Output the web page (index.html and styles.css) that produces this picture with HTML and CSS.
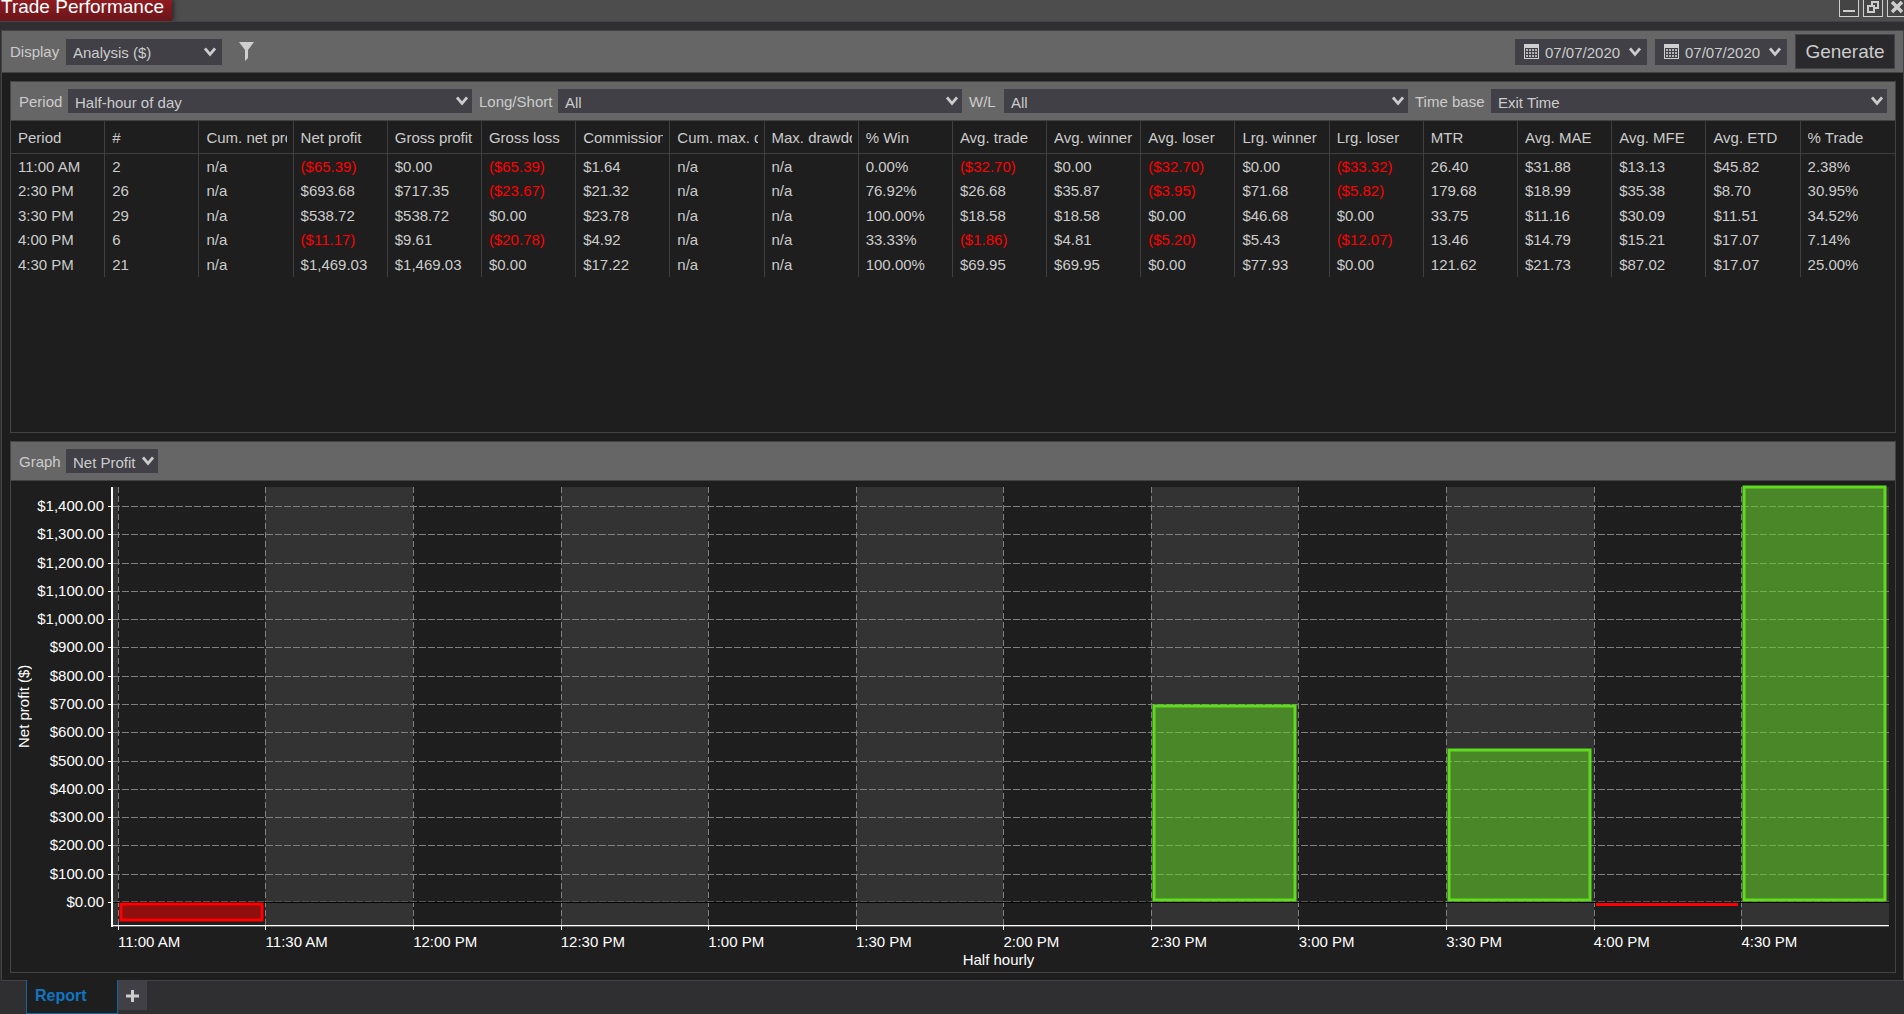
FILE: index.html
```html
<!DOCTYPE html>
<html lang="en">
<head>
<meta charset="utf-8">
<title>Trade Performance</title>
<link rel="stylesheet" href="styles.css">
</head>
<body>
<svg class="defs" aria-hidden="true">
  <symbol id="chevron" viewBox="0 0 12 10"><path d="M1 1.500 6 7.300 11 1.500" fill="none" stroke="currentColor" stroke-width="2.800"/></symbol>
  <symbol id="calendar" viewBox="0 0 15 15">
    <path d="M0 0h15v15H0z" fill="#cfcfcf"/>
    <path d="M1 4h13v10H1z" fill="#404046"/>
    <path d="M2 5h2v2H2zM5 5h2v2H5zM8 5h2v2H8zM11 5h2v2h-2zM2 8h2v2H2zM5 8h2v2H5zM8 8h2v2H8zM11 8h2v2h-2zM2 11h2v2H2zM5 11h2v2H5zM8 11h2v2H8zM11 11h2v2h-2z" fill="#b4b4b6"/>
  </symbol>
</svg>

<header class="titlebar">
  <h1 class="title">Trade Performance</h1>
  <div class="window-buttons">
    <button type="button" aria-label="Minimize"><svg width="18" height="16"><path d="M3 11h12" stroke="currentColor" stroke-width="2"/></svg></button>
    <button type="button" aria-label="Restore"><svg width="18" height="16"><path d="M8 5V2h6v6h-3M4 6h6v6H4z" fill="none" stroke="currentColor" stroke-width="2"/></svg></button>
    <button type="button" aria-label="Close"><svg width="18" height="16"><path d="M4 2l10 10M14 2 4 12" stroke="currentColor" stroke-width="3.500"/></svg></button>
  </div>
</header>

<main class="window">
  <div class="toolbar main-toolbar">
    <label for="display">Display</label>
    <div class="combo combo-display"><select id="display"><option>Analysis ($)</option></select><svg class="chevron"><use href="#chevron"/></svg></div>
    <button type="button" class="filter" aria-label="Filter"><svg width="15" height="19" viewBox="0 0 15 19"><path d="M0 0h15L9 8v8l-3 3V8z" fill="#cfcfcf"/></svg></button>
    <div class="combo combo-date"><svg class="calendar"><use href="#calendar"/></svg><select aria-label="Start date"><option>07/07/2020</option></select><svg class="chevron"><use href="#chevron"/></svg></div>
    <div class="combo combo-date"><svg class="calendar"><use href="#calendar"/></svg><select aria-label="End date"><option>07/07/2020</option></select><svg class="chevron"><use href="#chevron"/></svg></div>
    <button type="button" class="generate">Generate</button>
  </div>

  <div class="content">
    <section class="panel">
      <div class="toolbar filters">
        <label for="period">Period</label>
        <div class="combo"><select id="period"><option>Half-hour of day</option></select><svg class="chevron"><use href="#chevron"/></svg></div>
        <label for="side">Long/Short</label>
        <div class="combo"><select id="side"><option>All</option></select><svg class="chevron"><use href="#chevron"/></svg></div>
        <label for="wl">W/L</label>
        <div class="combo"><select id="wl"><option>All</option></select><svg class="chevron"><use href="#chevron"/></svg></div>
        <label for="timebase">Time base</label>
        <div class="combo"><select id="timebase"><option>Exit Time</option></select><svg class="chevron"><use href="#chevron"/></svg></div>
      </div>
      <table class="results">
        <thead>
          <tr><th><span>Period</span></th><th><span>#</span></th><th><span>Cum. net profit</span></th><th><span>Net profit</span></th><th><span>Gross profit</span></th><th><span>Gross loss</span></th><th><span>Commission</span></th><th><span>Cum. max. drawdown</span></th><th><span>Max. drawdown</span></th><th><span>% Win</span></th><th><span>Avg. trade</span></th><th><span>Avg. winner</span></th><th><span>Avg. loser</span></th><th><span>Lrg. winner</span></th><th><span>Lrg. loser</span></th><th><span>MTR</span></th><th><span>Avg. MAE</span></th><th><span>Avg. MFE</span></th><th><span>Avg. ETD</span></th><th><span>% Trade</span></th></tr>
        </thead>
        <tbody>
          <tr><td>11:00 AM</td><td>2</td><td>n/a</td><td class="neg">($65.39)</td><td>$0.00</td><td class="neg">($65.39)</td><td>$1.64</td><td>n/a</td><td>n/a</td><td>0.00%</td><td class="neg">($32.70)</td><td>$0.00</td><td class="neg">($32.70)</td><td>$0.00</td><td class="neg">($33.32)</td><td>26.40</td><td>$31.88</td><td>$13.13</td><td>$45.82</td><td>2.38%</td></tr>
          <tr><td>2:30 PM</td><td>26</td><td>n/a</td><td>$693.68</td><td>$717.35</td><td class="neg">($23.67)</td><td>$21.32</td><td>n/a</td><td>n/a</td><td>76.92%</td><td>$26.68</td><td>$35.87</td><td class="neg">($3.95)</td><td>$71.68</td><td class="neg">($5.82)</td><td>179.68</td><td>$18.99</td><td>$35.38</td><td>$8.70</td><td>30.95%</td></tr>
          <tr><td>3:30 PM</td><td>29</td><td>n/a</td><td>$538.72</td><td>$538.72</td><td>$0.00</td><td>$23.78</td><td>n/a</td><td>n/a</td><td>100.00%</td><td>$18.58</td><td>$18.58</td><td>$0.00</td><td>$46.68</td><td>$0.00</td><td>33.75</td><td>$11.16</td><td>$30.09</td><td>$11.51</td><td>34.52%</td></tr>
          <tr><td>4:00 PM</td><td>6</td><td>n/a</td><td class="neg">($11.17)</td><td>$9.61</td><td class="neg">($20.78)</td><td>$4.92</td><td>n/a</td><td>n/a</td><td>33.33%</td><td class="neg">($1.86)</td><td>$4.81</td><td class="neg">($5.20)</td><td>$5.43</td><td class="neg">($12.07)</td><td>13.46</td><td>$14.79</td><td>$15.21</td><td>$17.07</td><td>7.14%</td></tr>
          <tr><td>4:30 PM</td><td>21</td><td>n/a</td><td>$1,469.03</td><td>$1,469.03</td><td>$0.00</td><td>$17.22</td><td>n/a</td><td>n/a</td><td>100.00%</td><td>$69.95</td><td>$69.95</td><td>$0.00</td><td>$77.93</td><td>$0.00</td><td>121.62</td><td>$21.73</td><td>$87.02</td><td>$17.07</td><td>25.00%</td></tr>
        </tbody>
      </table>
    </section>

    <section class="panel">
      <div class="toolbar graph-toolbar">
        <label for="graph">Graph</label>
        <div class="combo combo-graph"><select id="graph"><option>Net Profit</option></select><svg class="chevron"><use href="#chevron"/></svg></div>
      </div>
      <div class="chart">
        <div class="y-title">Net profit ($)</div>
        <ul class="y-labels">
          <li>$1,400.00</li><li>$1,300.00</li><li>$1,200.00</li><li>$1,100.00</li><li>$1,000.00</li><li>$900.00</li><li>$800.00</li><li>$700.00</li><li>$600.00</li><li>$500.00</li><li>$400.00</li><li>$300.00</li><li>$200.00</li><li>$100.00</li><li>$0.00</li>
        </ul>
        <svg class="plot" viewBox="0 0 1781 445" preserveAspectRatio="none" role="img" aria-label="Net profit by half hour">
          <path class="band" d="M5 1h5v438H5zM157 1h148v438H157zM453 1h147v438H453zM748 1h147v438H748zM1043 1h147v438h-147zM1338 1h148v438h-148zM1633 1h148v438h-148z"/>
          <path class="grid" d="M5 20.500H1781M5 48.500H1781M5 77.500H1781M5 105.500H1781M5 133.500H1781M5 161.500H1781M5 190.500H1781M5 218.500H1781M5 246.500H1781M5 275.500H1781M5 303.500H1781M5 331.500H1781M5 359.500H1781M5 388.500H1781"/>
          <path class="grid grid-zero" d="M5 415.500H1781"/>
          <path class="grid grid-v" d="M10.500 1V439M157.500 1V439M305.500 1V439M453.500 1V439M600.500 1V439M748.500 1V439M895.500 1V439M1043.500 1V439M1190.500 1V439M1338.500 1V439M1486.500 1V439M1633.500 1V439"/>
          <path class="zero" d="M5 416.500H1781"/>
          <path class="axis-shade" d="M5 440.500H1781"/>
          <path class="tick" d="M0 20.500H4M0 48.500H4M0 77.500H4M0 105.500H4M0 133.500H4M0 161.500H4M0 190.500H4M0 218.500H4M0 246.500H4M0 275.500H4M0 303.500H4M0 331.500H4M0 359.500H4M0 388.500H4M0 416.500H4M3 439.500H1781M10.500 440V444M157.500 440V444M305.500 440V444M453.500 440V444M600.500 440V444M748.500 440V444M895.500 440V444M1043.500 440V444M1190.500 440V444M1338.500 440V444M1486.500 440V444M1633.500 440V444"/>
          <path class="axis" d="M4 1V441"/>
          <path class="gain" d="M1046 220h141v194h-141zM1341 264h141v150h-141zM1636 1h141v413h-141z"/>
          <path class="loss" d="M13 418h141v16H13z"/>
          <path class="loss-flat" d="M1488 418.500h142"/>
        </svg>
        <ul class="x-labels">
          <li>11:00 AM</li><li>11:30 AM</li><li>12:00 PM</li><li>12:30 PM</li><li>1:00 PM</li><li>1:30 PM</li><li>2:00 PM</li><li>2:30 PM</li><li>3:00 PM</li><li>3:30 PM</li><li>4:00 PM</li><li>4:30 PM</li>
        </ul>
        <div class="x-title">Half hourly</div>
      </div>
    </section>
  </div>
</main>

<nav class="tabs">
  <a class="tab" href="#report">Report</a>
  <button type="button" class="add-tab" aria-label="Add tab"><svg width="13" height="12"><path d="M0 6h13M6.500 0v12" stroke="currentColor" stroke-width="3"/></svg></button>
</nav>
</body>
</html>
```

FILE: styles.css
```css
* { box-sizing: border-box; }

body {
  margin: 0;
  height: 100vh;
  display: flex;
  flex-direction: column;
  overflow: hidden;
  background: #2f2f31;
  color: #cccccc;
  font: 15px/18px "Liberation Sans", Arial, sans-serif;
}

button, select { font: inherit; color: inherit; margin: 0; border: 0; padding: 0; border-radius: 0; }
ul { margin: 0; padding: 0; list-style: none; }
.defs { display: none; }

/* Title bar */
.titlebar {
  flex: none;
  display: flex;
  justify-content: space-between;
  height: 22px;
  background: #4d4d4d;
  border-bottom: 1px solid #434345;
}
.title {
  margin: 0;
  width: 172px;
  height: 21px;
  padding-left: 1px;
  background: linear-gradient(#8f1b20, #6a151a);
  box-shadow: 2px 0 4px #2a2a2a;
  clip-path: inset(0 -8px 0 0);
  color: #ffffff;
  font-size: 19px;
  font-weight: 400;
  line-height: 13px;
  white-space: nowrap;
}
.window-buttons { display: flex; gap: 4px; margin-right: -3px; }
.window-buttons button {
  width: 20px;
  height: 17px;
  border: 1px solid #cfcfcf;
  border-top: 0;
  background: #444444;
  line-height: 0;
}

/* Window */
.window {
  flex: 1;
  min-height: 0;
  display: flex;
  flex-direction: column;
  margin: 8px 0 0 1px;
  border: 1px solid #434345;
  background: #1e1e1e;
}
.toolbar {
  flex: none;
  background: #666666;
  border-bottom: 1px solid #434345;
  align-items: center;
}
.toolbar label { padding-top: 1px; white-space: nowrap; }
.main-toolbar { display: flex; height: 42px; padding: 0 8px; gap: 8px; }
.main-toolbar label { width: 48px; }
.combo { display: grid; height: 24px; background: #404046; align-items: center; }
.combo > * { grid-area: 1 / 1; }
.combo select {
  appearance: none;
  width: 100%;
  height: 24px;
  padding: 3px 8px 0 7px;
  background: transparent;
}
.chevron { width: 12px; height: 10px; justify-self: end; margin-right: 4px; pointer-events: none; }
.main-toolbar .combo { height: 26px; }
.main-toolbar .chevron { margin-right: 6px; }
.combo-display { width: 156px; }
.combo-date { width: 132px; }
.main-toolbar .combo-date select { padding-left: 30px; }
.calendar { width: 15px; height: 15px; margin-left: 9px; pointer-events: none; }
.filter { margin: 0 auto 0 9px; background: none; line-height: 0; }
.generate {
  width: 100px;
  height: 35px;
  border: 1px solid #434345;
  background: #2a2a2c;
  font-size: 19px;
}

/* Panels */
.content {
  flex: 1;
  min-height: 0;
  display: grid;
  grid-template-rows: 352fr 532fr;
  gap: 8px;
  padding: 8px 7px 7px 8px;
}
.panel { display: flex; flex-direction: column; min-height: 0; border: 1px solid #434345; }
.filters {
  display: grid;
  grid-template-columns: 49px 404fr 86px 404fr 42px 404fr 83px 396fr;
  height: 39px;
  padding: 0 8px;
}
.filters label:not(:first-child) { padding-left: 7px; }
.graph-toolbar { display: flex; height: 39px; padding: 0 8px; }
.graph-toolbar label { width: 47px; }
.combo-graph { width: 92px; }

/* Results */
.results { width: 100%; table-layout: fixed; border-collapse: separate; border-spacing: 0; }
.results th, .results td {
  padding: 0 6px 0 7px;
  border-right: 1px solid #3f3f42;
  text-align: left;
  font-weight: 400;
  white-space: nowrap;
}
.results th:last-child, .results td:last-child { border-right: 0; }
.results th { height: 33px; padding-top: 2px; border-bottom: 1px solid #3f3f42; }
.results th span { display: block; overflow: hidden; }
.results td { height: 25px; }
.results tr:nth-child(even) td { height: 24px; }
.results .neg { color: #ff0000; }

/* Chart */
.chart {
  flex: 1;
  min-height: 0;
  display: grid;
  grid-template: minmax(0, 1fr) 22px 14px / 26px 71px minmax(0, 1fr);
  padding: 0 6px 5px 0;
  color: #ffffff;
}
.y-title {
  writing-mode: vertical-rl;
  transform: rotate(180deg);
  text-align: center;
  line-height: 26px;
}
.y-labels { display: flex; flex-direction: column; padding: 11px 4px 15px 0; text-align: right; }
.y-labels li { flex: 1; display: flex; align-items: center; justify-content: flex-end; min-height: 0; }
.plot { width: 100%; height: calc(100% - 5px); align-self: end; overflow: visible; }
.plot path { fill: none; stroke-width: 1; vector-effect: non-scaling-stroke; }
.plot .band { fill: #333333; }
.plot .grid { stroke: #808080; stroke-dasharray: 7 2; }
.plot .grid-v { stroke-dasharray: 6 3; }
.plot .grid-zero { stroke: #555555; }
.plot .zero { stroke: #000000; }
.plot .tick { stroke: #ffffff; }
.plot .axis { stroke: #ffffff; stroke-width: 2; }
.plot .axis-shade { stroke: #666666; }
.plot .gain { fill: #5fdc1e80; stroke: #5fdc1e; stroke-width: 3; }
.plot .loss { fill: #ff000080; stroke: #ff0000; stroke-width: 3; }
.plot .loss-flat { stroke: #ff0000; stroke-width: 3; }
.x-labels {
  grid-column: 3;
  display: grid;
  grid-template-columns: repeat(12, 1fr);
  padding-left: 10px;
  line-height: 22px;
}
.x-title { grid-column: 3; text-align: center; line-height: 14px; }

/* Tabs */
.tabs { flex: none; display: flex; height: 34px; margin-top: -1px; padding-left: 26px; }
.tab {
  width: 92px;
  padding-left: 8px;
  border: 1px solid #1464a0;
  border-top: 0;
  background: #1e1e1e;
  color: #0e76c4;
  font-size: 16px;
  font-weight: 700;
  line-height: 31px;
  text-decoration: none;
}
.add-tab {
  display: grid;
  place-items: center;
  width: 29px;
  height: 29px;
  margin-top: 1px;
  background: #404046;
}
```
